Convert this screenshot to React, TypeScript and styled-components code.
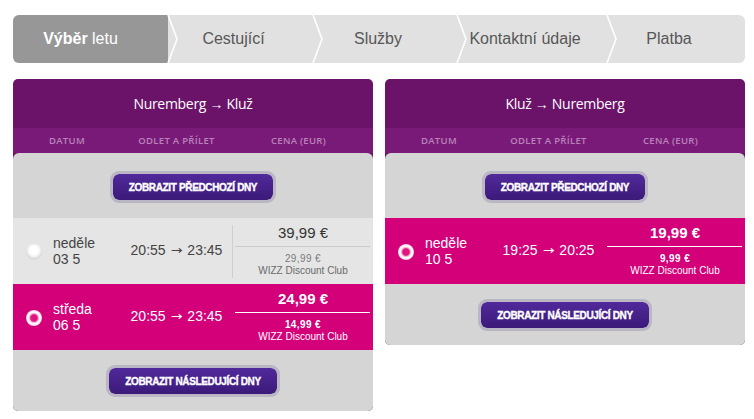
import { createGlobalStyle, styled } from 'styled-components';

const GlobalStyle = createGlobalStyle`
  body {
    margin: 0;
    background: #fff;
    font-family: 'Liberation Sans', Arial, sans-serif;
  }
`;

type Flight = {
  day: string;
  date: string;
  from: string;
  to: string;
  price: string;
  clubPrice: string;
  selected?: boolean;
};

type Leg = {
  title: string;
  flights: Flight[];
};

const legs: Leg[] = [
  {
    title: 'Nuremberg → Kluž',
    flights: [
      { day: 'neděle', date: '03 5', from: '20:55', to: '23:45', price: '39,99 €', clubPrice: '29,99 €' },
      { day: 'středa', date: '06 5', from: '20:55', to: '23:45', price: '24,99 €', clubPrice: '14,99 €', selected: true },
    ],
  },
  {
    title: 'Kluž → Nuremberg',
    flights: [
      { day: 'neděle', date: '10 5', from: '19:25', to: '20:25', price: '19,99 €', clubPrice: '9,99 €', selected: true },
    ],
  },
];

const steps = [
  { label: 'Cestující', width: 145 },
  { label: 'Služby', width: 144 },
  { label: 'Kontaktní údaje', width: 150 },
  { label: 'Platba', width: 0 },
];

function Chevron() {
  return (
    <ChevronSvg width="12" height="48" viewBox="0 0 12 48">
      <polygon points="1,0 12,0 12,48 1,48 10,24" fill="#e1e1e1" />
      <polyline points="1,0 10,24 1,48" fill="none" stroke="#fff" strokeWidth="1.6" />
    </ChevronSvg>
  );
}

export default function App() {
  return (
    <Page>
      <GlobalStyle />
      <Crumbs>
        <Step $width={155} $active>
          <span>
            <b>Výběr</b> letu
          </span>
        </Step>
        {steps.map((s) => (
          <Step key={s.label} $width={s.width}>
            <Chevron />
            <span>{s.label}</span>
          </Step>
        ))}
      </Crumbs>

      <Panels>
        {legs.map((leg) => (
          <Panel key={leg.title}>
            <PanelTitle>{leg.title}</PanelTitle>
            <ColumnHeads>
              <span>DATUM</span>
              <span>ODLET A PŘÍLET</span>
              <span>CENA (EUR)</span>
            </ColumnHeads>
            <PanelBody>
              <DaysButton>ZOBRAZIT PŘEDCHOZÍ DNY</DaysButton>
              <RowList>
                {leg.flights.map((f) => (
                  <FlightRow key={f.date} $selected={f.selected}>
                    <DateCell>
                      <Radio $selected={f.selected} />
                      <div>
                        {f.day}
                        <br />
                        {f.date}
                      </div>
                    </DateCell>
                    <TimeCell>
                      {f.from}
                      <Arrow>→</Arrow>
                      {f.to}
                    </TimeCell>
                    <PriceCell $selected={f.selected}>
                      <MainPrice $selected={f.selected}>{f.price}</MainPrice>
                      <PriceRule $selected={f.selected} />
                      <ClubPrice $selected={f.selected}>{f.clubPrice}</ClubPrice>
                      <ClubName $selected={f.selected}>WIZZ Discount Club</ClubName>
                    </PriceCell>
                  </FlightRow>
                ))}
              </RowList>
              <DaysButton>ZOBRAZIT NÁSLEDUJÍCÍ DNY</DaysButton>
            </PanelBody>
          </Panel>
        ))}
      </Panels>
    </Page>
  );
}

const Page = styled.div`
  width: 732px;
  padding: 15px 9px 0 13px;
`;

const Crumbs = styled.div`
  display: flex;
  height: 48px;
  border-radius: 6px;
  overflow: hidden;
  background: #e1e1e1;
`;

const Step = styled.div<{ $width: number; $active?: boolean }>`
  flex: ${(p) => (p.$width ? `0 0 ${p.$width}px` : '1 1 auto')};
  display: flex;
  align-items: center;
  background: ${(p) => (p.$active ? '#979797' : 'transparent')};
  color: ${(p) => (p.$active ? '#fff' : '#575757')};
  font-size: 16px;

  & > span {
    flex: 1;
    text-align: center;
    margin-right: ${(p) => (p.$active ? '20px' : '25px')};
  }

  & b {
    font-weight: 700;
  }
`;

const ChevronSvg = styled.svg`
  flex: 0 0 12px;
  margin-left: -1px;
  display: block;
`;

const Panels = styled.div`
  display: flex;
  gap: 12px;
  margin-top: 16px;
  align-items: flex-start;
`;

const Panel = styled.section`
  width: 360px;
  border-radius: 5px;
  overflow: hidden;
  background: #6a1369;
`;

const PanelTitle = styled.h2`
  margin: 0;
  height: 49px;
  display: flex;
  align-items: center;
  justify-content: center;
  color: #fff;
  font-family: 'Open Sans', sans-serif;
  font-size: 14px;
  font-weight: 400;
  letter-spacing: -0.3px;
`;

const columns = '108px 111px 1fr';

const ColumnHeads = styled.div`
  display: grid;
  grid-template-columns: ${columns};
  height: 25px;
  align-items: center;
  text-align: center;
  background: #791a79;
  color: #b983b9;
  font-family: 'Open Sans', sans-serif;
  font-size: 9.5px;
  font-weight: 600;
  letter-spacing: 0.3px;

  & span:last-child {
    padding-right: 8px;
  }
`;

const PanelBody = styled.div`
  background: #d5d5d5;
  border-radius: 6px 6px 0 0;
  padding: 18px 0 14px;
  display: flex;
  flex-direction: column;
  gap: 15px;
`;

const DaysButton = styled.button`
  align-self: center;
  height: 32px;
  padding: 0 16px;
  border: 3px solid #bbb6c4;
  border-radius: 9px;
  background: linear-gradient(#51299b, #3b1a79) padding-box;
  color: #fff;
  font-family: 'Liberation Sans', Arial, sans-serif;
  font-size: 10px;
  font-weight: 700;
  letter-spacing: -0.35px;
  -webkit-text-stroke: 0.35px #fff;
  cursor: pointer;
`;

const RowList = styled.div`
  display: flex;
  flex-direction: column;
`;

const FlightRow = styled.div<{ $selected?: boolean }>`
  display: grid;
  grid-template-columns: ${columns};
  height: 66px;
  background: ${(p) => (p.$selected ? '#d3007a' : '#e5e5e5')};
  color: ${(p) => (p.$selected ? '#fff' : '#444')};
  font-size: 14px;
`;

const DateCell = styled.div`
  display: flex;
  align-items: center;
  gap: 11px;
  padding-left: 13px;
  line-height: 16px;
`;

const Radio = styled.span<{ $selected?: boolean }>`
  width: 16px;
  height: 16px;
  border-radius: 50%;
  flex: 0 0 16px;
  margin-top: 2px;
  background: ${(p) =>
    p.$selected
      ? 'radial-gradient(circle, #e0157f 0 3.2px, #f3b3d4 4.5px, #fff 5.8px, #fbeef5 7px, #ecbfd7 8px)'
      : 'radial-gradient(circle at 50% 40%, #fff 0 4px, #f4f4f4 6px, #dcdcdc 8px)'};
`;

const TimeCell = styled.div`
  display: flex;
  align-items: center;
  justify-content: center;
  padding-bottom: 2px;
`;

const Arrow = styled.span`
  font-family: 'DejaVu Sans', sans-serif;
  font-size: 14px;
  margin: 0 5px;
  transform: scaleY(0.8);
`;

const PriceCell = styled.div<{ $selected?: boolean }>`
  margin: 7px 0 6px;
  border-left: 1px solid ${(p) => (p.$selected ? 'transparent' : '#cfcfcf')};
  display: flex;
  flex-direction: column;
  align-items: center;
`;

const MainPrice = styled.div<{ $selected?: boolean }>`
  line-height: 16px;
  font-size: 15px;
  font-weight: ${(p) => (p.$selected ? 700 : 400)};
  color: ${(p) => (p.$selected ? '#fff' : '#333')};
`;

const PriceRule = styled.div<{ $selected?: boolean }>`
  align-self: stretch;
  height: 1px;
  margin: 5px 3px 0 2px;
  background: ${(p) => (p.$selected ? '#fff' : '#c9c9c9')};
`;

const ClubPrice = styled.div<{ $selected?: boolean }>`
  margin-top: 6px;
  line-height: 11px;
  font-size: 10px;
  letter-spacing: 0.4px;
  font-weight: ${(p) => (p.$selected ? 700 : 400)};
  color: ${(p) => (p.$selected ? '#fff' : '#7a7a7a')};
`;

const ClubName = styled.div<{ $selected?: boolean }>`
  line-height: 13px;
  font-size: 10px;
  color: ${(p) => (p.$selected ? '#fff' : '#6a6a6a')};
`;
